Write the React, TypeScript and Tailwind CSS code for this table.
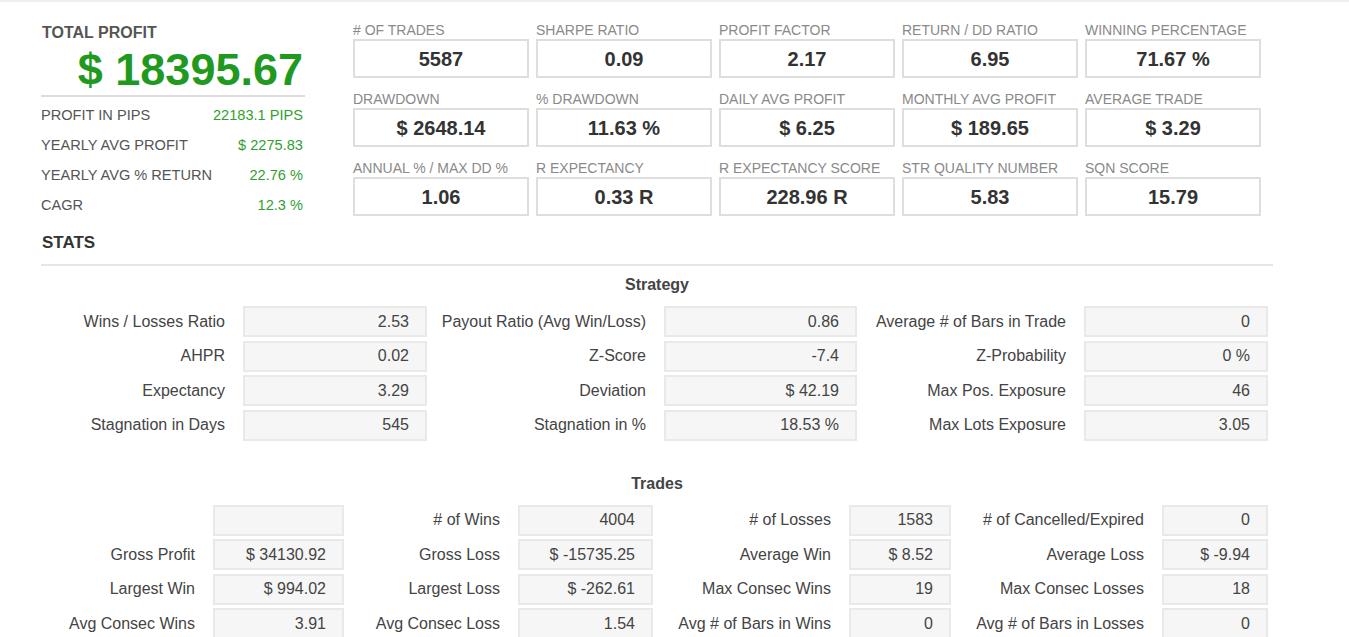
import React from 'react';

const metrics: { label: string; value: string }[] = [
  { label: '# OF TRADES', value: '5587' },
  { label: 'SHARPE RATIO', value: '0.09' },
  { label: 'PROFIT FACTOR', value: '2.17' },
  { label: 'RETURN / DD RATIO', value: '6.95' },
  { label: 'WINNING PERCENTAGE', value: '71.67 %' },
  { label: 'DRAWDOWN', value: '$ 2648.14' },
  { label: '% DRAWDOWN', value: '11.63 %' },
  { label: 'DAILY AVG PROFIT', value: '$ 6.25' },
  { label: 'MONTHLY AVG PROFIT', value: '$ 189.65' },
  { label: 'AVERAGE TRADE', value: '$ 3.29' },
  { label: 'ANNUAL % / MAX DD %', value: '1.06' },
  { label: 'R EXPECTANCY', value: '0.33 R' },
  { label: 'R EXPECTANCY SCORE', value: '228.96 R' },
  { label: 'STR QUALITY NUMBER', value: '5.83' },
  { label: 'SQN SCORE', value: '15.79' },
];

const summary: [string, string][] = [
  ['PROFIT IN PIPS', '22183.1 PIPS'],
  ['YEARLY AVG PROFIT', '$ 2275.83'],
  ['YEARLY AVG % RETURN', '22.76 %'],
  ['CAGR', '12.3 %'],
];

const strategy: string[][] = [
  ['Wins / Losses Ratio', '2.53', 'Payout Ratio (Avg Win/Loss)', '0.86', 'Average # of Bars in Trade', '0'],
  ['AHPR', '0.02', 'Z-Score', '-7.4', 'Z-Probability', '0 %'],
  ['Expectancy', '3.29', 'Deviation', '$ 42.19', 'Max Pos. Exposure', '46'],
  ['Stagnation in Days', '545', 'Stagnation in %', '18.53 %', 'Max Lots Exposure', '3.05'],
];

const trades: string[][] = [
  ['', '', '# of Wins', '4004', '# of Losses', '1583', '# of Cancelled/Expired', '0'],
  ['Gross Profit', '$ 34130.92', 'Gross Loss', '$ -15735.25', 'Average Win', '$ 8.52', 'Average Loss', '$ -9.94'],
  ['Largest Win', '$ 994.02', 'Largest Loss', '$ -262.61', 'Max Consec Wins', '19', 'Max Consec Losses', '18'],
  ['Avg Consec Wins', '3.91', 'Avg Consec Loss', '1.54', 'Avg # of Bars in Wins', '0', 'Avg # of Bars in Losses', '0'],
];

const StatGrid = ({ rows, cols }: { rows: string[][]; cols: string }) => (
  <div className={`grid ${cols} gap-y-[3.5px]`}>
    {rows.map((row, r) =>
      row.map((cell, i) =>
        i % 2 === 0 ? (
          <div key={`${r}-${i}`} className="h-[31px] flex items-center justify-end pr-[18px] whitespace-nowrap">
            {cell}
          </div>
        ) : (
          <div
            key={`${r}-${i}`}
            className="h-[31px] flex items-center justify-end pr-[16px] bg-[#f6f6f6] border-2 border-[#e9e9e9] whitespace-nowrap"
          >
            {cell}
          </div>
        )
      )
    )}
  </div>
);

export default function App() {
  return (
    <div className="w-[1349px] h-[637px] overflow-hidden bg-white border-t-2 border-[#efefef] font-['Liberation_Sans',Arial,sans-serif]">
      <div className="pl-[41px] pt-[19px] w-[1273px]">
        <div className="flex">
          {/* totals */}
          <div className="w-[264px] mt-[2px]">
            <div className="text-[16px] leading-[20px] font-bold text-[#555] pl-px">TOTAL PROFIT</div>
            <div className="text-[45px] leading-[45px] font-bold text-[#1f9a1f] text-right mt-[4px] pr-[2px]">$ 18395.67</div>
            <div className="mt-[3px] border-t-2 border-[#dddddd]" />
            <div className="mt-[4px]">
              {summary.map(([k, v]) => (
                <div key={k} className="h-[30px] flex items-center justify-between text-[14.6px] pr-[2px]">
                  <span className="text-[#555]">{k}</span>
                  <span className="text-[#2f9f2f]">{v}</span>
                </div>
              ))}
            </div>
          </div>

          {/* metric boxes */}
          <div className="ml-[48px] grid grid-cols-[repeat(5,176px)] gap-x-[7px] gap-y-[12px] content-start">
            {metrics.map((m) => (
              <div key={m.label}>
                <div className="h-[18px] leading-[18px] text-[14px] text-[#8a8a8a] whitespace-nowrap">{m.label}</div>
                <div className="h-[39px] border-2 border-[#dedede] flex items-center justify-center text-[20px] font-bold text-[#333]">
                  {m.value}
                </div>
              </div>
            ))}
          </div>
        </div>

        {/* stats */}
        <div className="mt-[10px] text-[17px] leading-[24px] font-bold text-[#333] pl-px">STATS</div>
        <div className="mt-[9px] border-t-2 border-[#e6e6e6]" />

        <div className="mt-[9px] text-center text-[16px] leading-[20px] font-bold text-[#444]">Strategy</div>
        <div className="mt-[11px] text-[16px] text-[#444]">
          <StatGrid rows={strategy} cols="grid-cols-[202px_184px_237px_193px_227px_184px]" />
        </div>

        <div className="mt-[33px] text-center text-[16px] leading-[20px] font-bold text-[#444]">Trades</div>
        <div className="mt-[11px] text-[16px] text-[#444]">
          <StatGrid rows={trades} cols="grid-cols-[172px_131px_174px_135px_196px_102px_211px_106px]" />
        </div>
      </div>
    </div>
  );
}
